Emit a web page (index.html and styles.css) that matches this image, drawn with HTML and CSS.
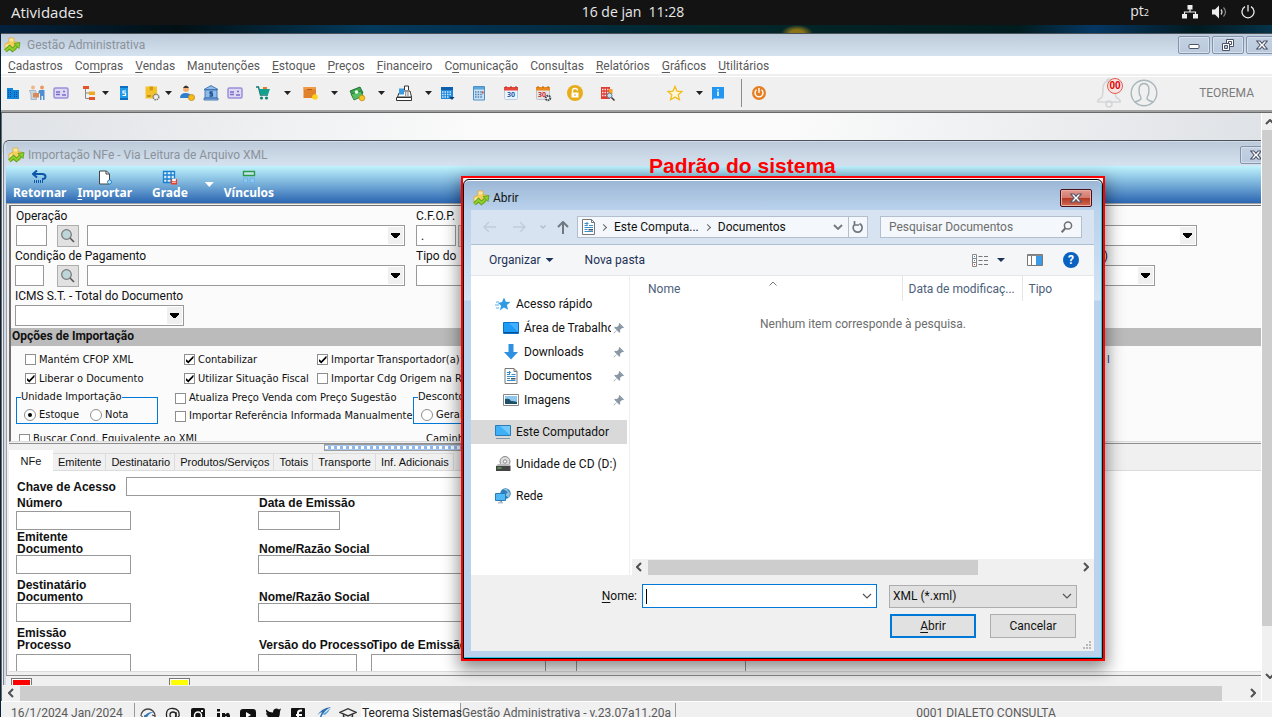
FILE: index.html
```html
<!DOCTYPE html>
<html lang="pt-BR">
<head>
<meta charset="utf-8">
<title>Gestão Administrativa</title>
<link rel="stylesheet" href="styles.css">
</head>
<body>
<svg class="sprite" aria-hidden="true">
  <symbol id="logo" viewBox="0 0 16 16">
    <path d="M5 1h5v4h4v5h-2v3H1V7l4-2z" fill="#f3cf5a" stroke="#d9a93a" stroke-width=".8"/>
    <path d="M5.500 1.500h4v3h-4zM1.500 7.500h4v3h-4z" fill="#fbe79a"/>
    <path d="M1.500 14l4-4 3 3 4-4" fill="none" stroke="#4a9418" stroke-width="3.600"/>
    <path d="M1.500 14l4-4 3 3 4-4" fill="none" stroke="#8fd02a" stroke-width="2.200"/>
    <path d="M10 6.500l6-1-1 6z" fill="#8fd02a" stroke="#4a9418" stroke-width=".7"/>
  </symbol>
  <symbol id="lens" viewBox="0 0 16 16">
    <path d="M9.500 9.500l4.500 4.500" stroke="#555" stroke-width="1.600"/>
    <circle cx="6.500" cy="6.500" r="4.800" fill="#bfd6d8" stroke="#777" stroke-width="1.200"/>
  </symbol>
  <symbol id="pin" viewBox="0 0 12 12">
    <path d="M6.500 1l4.500 4.500-1 .8-1-.3-2 2 .2 2-1 .8-2.300-2.500L1 11.500.5 11l3.200-3L1.200 5.800l.8-1 2 .2 2-2-.3-1z" fill="#8a98a5"/>
  </symbol>
  <symbol id="doc" viewBox="0 0 13 16">
    <path d="M.5.500h9l3 3v12H.5z" fill="#fff" stroke="#777"/>
    <path d="M9.500.500v3h3" fill="none" stroke="#777"/>
    <path d="M2.500 6.500h3M2.500 4.500h4M7 6.500h4M2.500 8.500h8.500M2.500 10.500h3M2.500 12.500h8.500M5 3v4" stroke="#3a8fc8"/>
    <path d="M6.500 10h4.500v1.500H6.500z" fill="#456"/>
  </symbol>
  <symbol id="xmark" viewBox="0 0 12 10">
    <path d="M.7 1h3.300l2 2.300L8 1h3.300L7.900 5l3.400 4H8L6 6.700 4 9H.7l3.400-4z" fill="#fff" stroke="#4c5368" stroke-width="1.100"/>
  </symbol>
</svg>

<header class="shell">
  <button class="shell-activities">Atividades</button>
  <time class="shell-clock">16 de jan&nbsp; 11:28</time>
  <div class="shell-tray">
    <span class="shell-lang">pt<small>2</small></span>
    <svg width="16" height="14" viewBox="0 0 16 14" fill="#eee"><path d="M5.500 0h5v4.500h-5zM0 9h5v4.500H0zM11 9h5v4.500h-5z"/><path d="M8 4v3M2.500 9.500V7h11v2.500" fill="none" stroke="#eee" stroke-width="1.200"/></svg>
    <svg width="15" height="14" viewBox="0 0 15 14"><path d="M0 4.500h3L7 .5v13l-4-4H0z" fill="#eee"/><path d="M9 4.500q2 2.500 0 5" fill="none" stroke="#ccc" stroke-width="1.300"/><path d="M11.500 2.500q4 4.500 0 9" fill="none" stroke="#888" stroke-width="1.200"/></svg>
    <svg width="14" height="14" viewBox="0 0 14 14" fill="none" stroke="#eee" stroke-width="1.300"><path d="M4 1.600a6 6 0 1 0 6 0M7 0v6.500"/></svg>
  </div>
</header>
<div class="wallpaper"></div>

<main class="app">
  <div class="titlebar">
    <svg class="app-logo"><use href="#logo"/></svg>
    <h1>Gestão Administrativa</h1>
    <div class="win-buttons">
      <button aria-label="Minimizar"><svg width="12" height="10" viewBox="0 0 12 10"><rect x="1" y="4.500" width="10" height="4" rx="1" fill="#fff" stroke="#4c5368"/></svg></button>
      <button aria-label="Restaurar"><svg width="12" height="12" viewBox="0 0 12 12" fill="#fff" stroke="#4c5368"><path d="M4.500.500h7v7h-7z"/><path d="M6.500 2.500h3v3h-3z"/><path d="M.5 4.500h7v7h-7z"/><path d="M2.500 6.500h3v3h-3z" fill="#b9c8dc"/></svg></button>
      <button aria-label="Fechar"><svg width="12" height="10"><use href="#xmark"/></svg></button>
    </div>
  </div>

  <nav class="menubar">
    <a href="#"><u>C</u>adastros</a><a href="#">Co<u>m</u>pras</a><a href="#"><u>V</u>endas</a><a href="#">Ma<u>n</u>utenções</a><a href="#"><u>E</u>stoque</a><a href="#"><u>P</u>reços</a><a href="#"><u>F</u>inanceiro</a><a href="#">C<u>o</u>municação</a><a href="#">Consu<u>l</u>tas</a><a href="#"><u>R</u>elatórios</a><a href="#"><u>G</u>ráficos</a><a href="#"><u>U</u>tilitários</a>
  </nav>

  <div class="toolbar">
    <button aria-label="Empresa"><svg viewBox="0 0 18 18"><path d="M3 4h6v11H3zM9 6h6v9H9z" fill="#1184dc"/><path d="M4 6.500h4M4 8.500h4M4 10.500h4M4 12.500h4M10 8.500h4M10 10.500h4M10 12.500h4" stroke="#0a4f9c" stroke-dasharray="1 1"/></svg></button>
    <button aria-label="Pessoas"><svg viewBox="0 0 18 18"><circle cx="5" cy="3.500" r="2" fill="#f0b78a"/><circle cx="14" cy="3.500" r="2" fill="#e89a6a"/><path d="M1.500 6.500h6l1 3v6H3v-5z" fill="#c9d6e0" stroke="#8fa3b3" stroke-width=".7"/><path d="M11.500 6h5v10h-1.500v-4h-1.500v4H12v-6l-2-2z" fill="#4f8fd0"/><path d="M5 9h6v4.500H5z" fill="#d88b58"/></svg></button>
    <button aria-label="Cartões"><svg viewBox="0 0 18 18"><rect x="2" y="4" width="14" height="10" rx="1.500" fill="#ddd8f4" stroke="#9a8fd8" stroke-width="1.500"/><path d="M4 8h4M4 10.500h4M10 11h4M11 7.500h2" stroke="#7a6cc8" stroke-width="1.400"/></svg></button>
    <button class="split" aria-label="Hierarquia"><svg viewBox="0 0 18 18"><path d="M3 2h6v3H3zM9 13h6v3H9z" fill="#e8542a"/><path d="M9 7.500h6v3.500H9z" fill="#f2a81e"/><path d="M5.500 5v9.500H9M5.500 9H9" stroke="#888" fill="none"/></svg><i class="caret"></i></button>
    <button aria-label="Serviços"><svg viewBox="0 0 18 18"><path d="M5 2h8v14H5z" fill="#1e9be8"/><path d="M5 2h8v2H5zM5 14h8v2H5z" fill="#0f6fbe"/><path d="M11 7H8v2h2.500v2.500H7.500" fill="none" stroke="#fff" stroke-width="1.200"/></svg></button>
    <button class="split" aria-label="Produtos"><svg viewBox="0 0 18 18"><path d="M2.500 2.500H14v12H2.500z" fill="#f4c32c"/><path d="M6.500 2.500h3.500v4H6.500z" fill="#d49a14"/><path d="M4 12h4" stroke="#8a6a10"/><circle cx="13" cy="13" r="2.800" fill="#eee" stroke="#777" stroke-width="1.500" stroke-dasharray="1.500 .7"/></svg><i class="caret"></i></button>
    <button aria-label="Vendedor"><svg viewBox="0 0 18 18"><circle cx="8" cy="5" r="3" fill="#f5b070"/><path d="M5 4q3-5 6 0z" fill="#333"/><path d="M2 14q0-5 6-5 4 0 5 3v2z" fill="#2f7fce"/><circle cx="13.500" cy="13.500" r="3" fill="#f6bb1f" stroke="#d08f10"/></svg></button>
    <button aria-label="Banco"><svg viewBox="0 0 18 18"><path d="M2 5.500L9 1.500l7 4zM3 6h12v8H3zM2 14h14v2H2z" fill="#8fbbe8" stroke="#3f73b0" stroke-width=".9"/><path d="M11 8H8v1.800h2.500V12H7.300M9 7v6" fill="none" stroke="#1b4f90" stroke-width="1.100"/></svg></button>
    <button aria-label="Cheques"><svg viewBox="0 0 18 18"><rect x="2" y="4" width="14" height="10" rx="1.500" fill="#ddd8f4" stroke="#9a8fd8" stroke-width="1.500"/><path d="M4 8h4M4 10.500h4M10 11h4M11 7.500h2" stroke="#7a6cc8" stroke-width="1.400"/></svg></button>
    <button class="split wide" aria-label="Compras"><svg viewBox="0 0 18 18"><path d="M2 3h2.500l2 8H14" fill="none" stroke="#11786f" stroke-width="1.400"/><path d="M5 5h11l-2 5.500H6.500z" fill="#13a08f"/><path d="M9 3h4v2H9z" fill="#e87a2a"/><circle cx="7.500" cy="14" r="1.600" fill="#13836f"/><circle cx="12.500" cy="14" r="1.600" fill="#13836f"/></svg><i class="caret"></i></button>
    <button class="split wide" aria-label="Estoque"><svg viewBox="0 0 18 18"><path d="M2.500 3H15v11H2.500z" fill="#e2812c"/><path d="M2.500 3H15v2.500H2.500z" fill="#f09a45"/><path d="M6 5.500h5" stroke="#b55d15"/><circle cx="14" cy="13" r="2.800" fill="#ffd21a"/></svg><i class="caret"></i></button>
    <button class="split wide" aria-label="Financeiro"><svg viewBox="0 0 18 18"><path d="M2 7l10-4 3 6-10 4z" fill="#3fa553" stroke="#1f7434"/><path d="M3 10l10-3 2 5-9 4z" fill="#58bd62" stroke="#1f7434" stroke-width=".8"/><circle cx="8.500" cy="8" r="1.800" fill="#e8ffe8"/><circle cx="14" cy="14" r="2.800" fill="#f7c325" stroke="#c98f0c" stroke-width=".8"/></svg><i class="caret"></i></button>
    <button class="split wide" aria-label="Caixa"><svg viewBox="0 0 18 18"><path d="M9.500 6V2h4v4M9 7h6l1.500 6h-14L4 9M1.500 13.500h15v3h-15z" fill="#fff" stroke="#333"/><path d="M4 4.500h5v6H4z" fill="#3a9be0"/><path d="M10 9h4M10 11h4" stroke="#333" stroke-dasharray="1 .7"/></svg><i class="caret"></i></button>
    <button aria-label="Agenda"><svg viewBox="0 0 18 18"><path d="M3 3h12v12H3z" fill="#1e88dd"/><path d="M3 3h12v3H3z" fill="#0c5fae"/><path d="M4 8h10M4 10.500h10M4 13h7" stroke="#cfe8ff" stroke-width="1.500" stroke-dasharray="1.500 1"/><path d="M11.500 13h5l-2.500 3z" fill="#123d6b"/></svg></button>
    <button class="far" aria-label="Calculadora"><svg viewBox="0 0 18 18"><path d="M3.500 2.500h11v13.500h-11z" fill="#cfe2f2" stroke="#4a90c8"/><path d="M4 3h10v2.500H4z" fill="#5aa6dd"/><path d="M5 8h8M5 10.500h8M5 13h8" stroke="#4888bb" stroke-width="1.500" stroke-dasharray="1.600 1"/><path d="M12 7.500h1.600v2H12z" fill="#e34040"/></svg></button>
    <button class="far" aria-label="Calendário"><svg viewBox="0 0 18 18"><rect x="2.500" y="3.500" width="13" height="12" rx="1" fill="#edf4fb" stroke="#b8cfe5"/><path d="M2 3h14v3.500H2z" fill="#e4473c"/><path d="M4 2v2M9 2v2M14 2v2" stroke="#a33"/><text x="9" y="13" class="cal-blue">30</text></svg></button>
    <button class="far" aria-label="Configurar calendário"><svg viewBox="0 0 18 18"><rect x="2.500" y="3.500" width="13" height="12" rx="1" fill="#e2e4e6" stroke="#c2c5c8"/><path d="M2 3h14v3.500H2z" fill="#ea8a1e"/><path d="M4 2v2M9 2v2M14 2v2" stroke="#a60"/><text x="8" y="13" class="cal-red">30</text><circle cx="14" cy="14" r="2.300" fill="#eee" stroke="#444c55" stroke-width="2" stroke-dasharray="1.500 .6"/></svg></button>
    <button class="far" aria-label="Segurança"><svg viewBox="0 0 18 18"><circle cx="9" cy="9" r="8" fill="#e7ad1a"/><path d="M5.500 8.500h7v5h-7z" fill="#fff"/><path d="M6.500 8.500V6.500q0-2 2.500-2t2.500 2" fill="none" stroke="#fff" stroke-width="1.300"/><path d="M9 10v2" stroke="#e7ad1a"/></svg></button>
    <button class="far" aria-label="Consulta"><svg viewBox="0 0 18 18"><path d="M3 3h9v12H3z" fill="#e23b30"/><path d="M4 5.500h7M4 8.500h7M4 11.500h7" stroke="#ffe1dc" stroke-width="1.500" stroke-dasharray="1.500 1"/><path d="M11 5h3.500v5H11z" fill="#f0a428"/><circle cx="11.500" cy="11.500" r="2.500" fill="#bfe1f3" stroke="#5d7f96"/><path d="M13.500 13.500l3 3" stroke="#333" stroke-width="1.400"/></svg></button>
    <button class="split wide star" aria-label="Favoritos"><svg viewBox="0 0 18 18"><path d="M9 2.500l2 4.600 5 .4-3.800 3.300 1.200 4.900L9 13.100l-4.400 2.600 1.200-4.900L2 7.500l5-.4z" fill="#fff8d8" stroke="#f3bd1f" stroke-width="1.300"/></svg><i class="caret"></i></button>
    <button aria-label="Informações"><svg viewBox="0 0 18 18"><path d="M3 3h12v11.500H5L3 16z" fill="#2196f3"/><path d="M9 7.500V12M9 5v1.500" stroke="#fff" stroke-width="1.500"/></svg></button>
    <span class="tool-sep"></span>
    <button aria-label="Sair"><svg viewBox="0 0 18 18"><circle cx="9" cy="9" r="7" fill="#e67e22"/><path d="M6.500 5.800a4 4 0 1 0 5 0M9 4v5" fill="none" stroke="#fff" stroke-width="1.400"/></svg></button>
    <div class="account">
      <button class="bell" aria-label="Notificações"><svg width="26" height="30" viewBox="0 0 26 30" fill="none" stroke="#d3d6d8" stroke-width="1.600"><path d="M13 3q-6 0-6 8 0 8-2 9-4 2-3 4h22q1-2-3-4-2-1-2-9 0-8-6-8zM11 3q0-2 2-2t2 2"/><circle cx="13" cy="26" r="3"/></svg><span class="count">00</span></button>
      <svg width="28" height="28" viewBox="0 0 28 28" fill="none" stroke="#a9b7ba" stroke-width="1.400"><circle cx="14" cy="14" r="12.800"/><path d="M4.500 23q6-1.500 6.500-3.500 0-2-1.500-4-1-5 0-8 1.500-3 4.500-3t4.500 3q1 3 0 8-1.500 2-1.500 4 .5 2 6.500 3.500"/></svg>
      <span class="user">TEOREMA</span>
    </div>
  </div>

  <div class="workspace">
    <div class="mdi">
      <section class="child">
        <div class="child-title">
          <svg class="app-logo"><use href="#logo"/></svg>
          <h2>Importação NFe - Via Leitura de Arquivo XML</h2>
          <button aria-label="Fechar importação"><svg width="12" height="10"><use href="#xmark"/></svg></button>
        </div>
        <div class="child-tools">
          <button><svg width="16" height="14" viewBox="0 0 16 14"><path d="M5 .5L1 4l4 3.500M1.500 4H10q3.500 0 3.500 2.500T10 9" fill="none" stroke="#0d56a8" stroke-width="2"/><path d="M2 11.500h9" stroke="#0d56a8" stroke-width="3" stroke-dasharray="1 1"/></svg>Retornar</button>
          <button class="t-import"><svg width="16" height="15" viewBox="0 0 16 15"><path d="M2.500 1h7l3 3v10h-10z" fill="#fff" stroke="#444"/><path d="M9 1v3h3" fill="none" stroke="#444"/><circle cx="12.500" cy="12" r="2" fill="#cce8fa" stroke="#1f86d0"/></svg><span><u>I</u>mportar</span></button>
          <button class="t-grade"><svg width="16" height="15" viewBox="0 0 16 15"><path d="M1.500 1.500h11v11h-11zM5 1v12M9 1v12M1 5h12M1 9h12" fill="#d9effc" stroke="#1b7fd0" stroke-width="1.300"/><path d="M9 9h6v5.500H9z" fill="#e8402a"/><path d="M10.500 9h3v2h-3zM10 12.500h4" fill="#fff" stroke="#fff" stroke-width=".6"/></svg>Grade</button>
          <button class="t-more" aria-label="Mais opções de grade"><i class="caret light"></i></button>
          <button class="t-links"><svg width="14" height="14" viewBox="0 0 14 14"><path d="M1.500 1.500h11v4h-11z" fill="#c5e6ee" stroke="#2c9c4a" stroke-width="1.400"/><path d="M1.500 8h4v4.500h-4zM8 8h4.500v4.500H8z" fill="#8cc7f2" stroke="#6fb2e6"/></svg>Vínculos</button>
        </div>

        <div class="child-body">
          <form class="import-form">
            <div class="row r1">
              <div class="f-left"><label for="op">Operação</label><div class="line"><input id="op" class="box code"><button type="button" class="find" aria-label="Buscar operação"><svg width="16" height="16"><use href="#lens"/></svg></button><span class="combo"><select aria-label="Operação"><option></option></select></span></div></div>
              <div class="f-right"><label for="cfop">C.F.O.P.</label><div class="line"><input id="cfop" class="box cfop" value="."><button type="button" class="find" aria-label="Buscar CFOP"></button><span class="combo"><select aria-label="CFOP"><option></option></select></span></div></div>
            </div>
            <div class="row r2">
              <div class="f-left"><label for="cond">Condição de Pagamento</label><div class="line"><input id="cond" class="box code"><button type="button" class="find" aria-label="Buscar condição"><svg width="16" height="16"><use href="#lens"/></svg></button><span class="combo"><select aria-label="Condição de Pagamento"><option></option></select></span></div></div>
              <div class="f-right"><div class="label-pair"><label for="tipo">Tipo do</label><span>)</span></div><div class="line"><span class="combo"><select id="tipo"><option></option></select></span></div></div>
            </div>
            <div class="row r3">
              <div><label for="icms">ICMS S.T. - Total do Documento</label><div class="line"><span class="combo small"><select id="icms"><option></option></select></span></div></div>
            </div>
            <h3>Opções de Importação</h3>
            <div class="options">
              <label><input type="checkbox">Mantém CFOP XML</label>
              <label><input type="checkbox" checked>Contabilizar</label>
              <label><input type="checkbox" checked>Importar Transportador(a)</label>
              <span class="tail">l</span>
              <label><input type="checkbox" checked>Liberar o Documento</label>
              <label><input type="checkbox" checked>Utilizar Situação Fiscal</label>
              <label><input type="checkbox">Importar Cdg Origem na Re</label>
            </div>
            <div class="groups">
              <fieldset class="unit"><legend>Unidade Importação</legend><label><input type="radio" name="un" checked>Estoque</label><label><input type="radio" name="un">Nota</label></fieldset>
              <div class="stack"><label><input type="checkbox">Atualiza Preço Venda com Preço Sugestão</label><label><input type="checkbox">Importar Referência Informada Manualmente</label></div>
              <fieldset class="disc"><legend>Desconto</legend><label><input type="radio" name="desc">Geral</label></fieldset>
            </div>
            <div class="last"><label><input type="checkbox">Buscar Cond. Equivalente ao XML</label><span>Caminho</span></div>
          </form>
          <div class="splitter"><i></i></div>
          <div class="tabs" role="tablist">
            <button role="tab" aria-selected="true">NFe</button><button role="tab">Emitente</button><button role="tab">Destinatario</button><button role="tab">Produtos/Serviços</button><button role="tab">Totais</button><button role="tab">Transporte</button><button role="tab">Inf. Adicionais</button>
          </div>
          <div class="nfe">
            <div class="key"><label for="chave">Chave de Acesso</label><input id="chave" class="box"></div>
            <div class="nfe-grid first"><label for="num">Número</label><label for="data">Data de Emissão</label><input id="num" class="box"><input id="data" class="box date"></div>
            <h4 class="close">Emitente</h4>
            <div class="nfe-grid"><label for="edoc">Documento</label><label for="enome">Nome/Razão Social</label><input id="edoc" class="box"><input id="enome" class="box name"></div>
            <h4>Destinatário</h4>
            <div class="nfe-grid"><label for="ddoc">Documento</label><label for="dnome">Nome/Razão Social</label><input id="ddoc" class="box"><input id="dnome" class="box name"></div>
            <h4>Emissão</h4>
            <div class="nfe-grid cut"><label for="proc">Processo</label><label for="ver">Versão do Processo</label><label for="temi">Tipo de Emissão</label><span></span><input id="proc" class="box"><input id="ver" class="box version"><input id="temi" class="box emission"><input class="box other" aria-label="Finalidade"></div>
          </div>
        </div>
        <div class="legend-bar"><i class="red"></i><i class="yellow"></i></div>
      </section>
      <div class="hscroll"><svg width="6" height="10" viewBox="0 0 6 10"><path d="M5 1L1 5l4 4"/></svg><i></i><svg width="6" height="10" viewBox="0 0 6 10"><path d="M1 1l4 4-4 4"/></svg></div>
    </div>
    <div class="vscroll"><svg width="10" height="6" viewBox="0 0 10 6"><path d="M1 5l4-4 4 4"/></svg><i></i><svg width="10" height="6" viewBox="0 0 10 6"><path d="M1 1l4 4 4-4"/></svg></div>
  </div>

  <footer class="status">
    <span class="s-date">16/1/2024 Jan/2024</span>
    <span class="s-icons">
      <svg viewBox="0 0 18 18"><path d="M2 10a7 7 0 0 1 14 0M3 10v5h3V9M13 9l3 1v5" fill="none" stroke="#444" stroke-width="1.300"/><path d="M4 14q2-9 12-8-8 1-9 9z" fill="#2f78b8"/></svg>
      <svg viewBox="0 0 18 18" fill="none" stroke="#222" stroke-width="1.300"><circle cx="9" cy="9" r="3"/><path d="M12 6v5q1 2 3-1 1-7-6-7.500T2.500 9q0 6 6 7"/></svg>
      <svg viewBox="0 0 18 18"><rect x="2" y="2" width="14" height="14" rx="2" fill="#111"/><circle cx="9" cy="9.500" r="3.500" fill="#111" stroke="#fff" stroke-width="1.500"/><path d="M12 4h2v2h-2z" fill="#fff"/></svg>
      <svg viewBox="0 0 18 18" fill="#111"><path d="M3 7h3v9H3zM3 3h3v2.500H3zM8 7h3v1.500q4-4 5 1V16h-3v-5q-1-2-2 0v5H8z"/></svg>
      <svg viewBox="0 0 18 18"><rect x="1" y="3" width="16" height="12" rx="3" fill="#111"/><path d="M7 6l5 3-5 3z" fill="#fff"/></svg>
      <svg viewBox="0 0 18 18" fill="#111"><path d="M2 3.500q3 3 7 3 0-4 4-4l2 1 2-1-1 3q0 9-8 10-4 0-6-1.500 3 0 4-1.500-2 0-3-2h1.500Q2 9 2 7l1.500.5Q1.500 6 2 3.500z"/></svg>
      <svg viewBox="0 0 18 18"><rect x="2" y="2" width="14" height="14" rx="1" fill="#111"/><path d="M13 4.500h-1.500Q9 4.500 9 7v9M7 9h6" fill="none" stroke="#fff" stroke-width="2"/></svg>
      <svg viewBox="0 0 18 18"><path d="M17 1Q6 2 2 12q2-5 6-6Q4 14 6 17q1-11 11-16z" fill="#2f6fb0"/><path d="M17 1q-5 6-9 7l3 1q4-3 6-8z" fill="#5aa7dd"/></svg>
      <svg class="cap" viewBox="0 0 20 18"><path d="M1 6l9-4 9 4-9 4zM5 8v6q5 3 10 0V8M5 11l5 2 5-2" fill="none" stroke="#333" stroke-width="1.500"/><path d="M12 13l7-2-5 5z" fill="#2f78b8"/></svg>
    </span>
    <span class="s-company">Teorema Sistemas</span>
    <span class="s-version">Gestão Administrativa - v.23.07a11.20a</span>
    <span class="s-user">0001 DIALETO CONSULTA</span>
  </footer>
</main>

<section class="callout">
  <p>Padrão do sistema</p>
  <div class="callout-frame">
    <div class="dialog" role="dialog" aria-label="Abrir">
      <div class="dlg-title"><svg class="app-logo"><use href="#logo"/></svg><span>Abrir</span><button aria-label="Fechar janela"><svg width="12" height="10"><use href="#xmark"/></svg></button></div>
      <div class="dlg-main">
        <div class="dlg-nav">
          <button class="arrow" aria-label="Voltar"><svg width="14" height="12" viewBox="0 0 14 12"><path d="M6 1L1 6l5 5M1 6h12" stroke="#c3cdd8"/></svg></button>
          <button class="arrow a2" aria-label="Avançar"><svg width="14" height="12" viewBox="0 0 14 12"><path d="M8 1l5 5-5 5M13 6H1" stroke="#c3cdd8"/></svg></button>
          <button class="arrow a3" aria-label="Recentes"><svg width="6" height="4" viewBox="0 0 6 4"><path d="M.5.500L3 3 5.500.500" stroke="#b5bfca"/></svg></button>
          <button class="arrow a4" aria-label="Acima"><svg width="12" height="13" viewBox="0 0 12 13"><path d="M1 6l5-5 5 5M6 1v12" stroke="#6f7881" stroke-width="2"/></svg></button>
          <div class="path"><svg width="13" height="16"><use href="#doc"/></svg><b></b><span>Este Computa...</span><b></b><span>Documentos</span><svg class="down" width="10" height="6" viewBox="0 0 10 6"><path d="M1 1l4 4 4-4" fill="none" stroke="#777" stroke-width="1.800"/></svg><button aria-label="Atualizar"><svg width="12" height="13" viewBox="0 0 12 13"><path d="M2.500 3.500A4.500 4.500 0 1 0 7.500 2.600M2.500 0v4h4.500" fill="none" stroke="#6f7881" stroke-width="1.700"/></svg></button></div>
          <div class="search"><input aria-label="Pesquisar" placeholder="Pesquisar Documentos"><svg width="12" height="12" viewBox="0 0 12 12"><circle cx="7" cy="4.500" r="3.600" fill="none" stroke="#6f6f6f" stroke-width="1.500"/><path d="M4.500 7L.7 11.300" stroke="#6f6f6f" stroke-width="2"/></svg></div>
        </div>
        <div class="dlg-tools">
          <button>Organizar<i class="caret navy"></i></button>
          <button class="new">Nova pasta</button>
          <button class="view" aria-label="Exibição"><svg width="17" height="13" viewBox="0 0 17 13"><path d="M.5.500h4v12h-4zM.5 4.500h4M.5 8.500h4" fill="#fff" stroke="#888"/><path d="M6.500 2.500h4M12 2.500h4M6.500 6.500h4M12 6.500h4M6.500 10.500h4M12 10.500h4" stroke="#777"/><path d="M2 2h1v1H2zM2 6h1v1H2z" fill="#3a8fc8"/><path d="M2 10h1v1H2z" fill="#d33"/></svg><i class="caret navy"></i></button>
          <button class="pane" aria-label="Painel de visualização"><svg width="16" height="12" viewBox="0 0 16 12"><path d="M.5.500h15v11H.5zM4.500 1v10" fill="#fff" stroke="#777"/><path d="M.5.500h15v1.500H.5z" fill="#888"/><path d="M9 2h6v9H9z" fill="#3a9be8"/></svg></button>
          <button class="help" aria-label="Ajuda">?</button>
        </div>
        <div class="dlg-content">
          <ul class="tree">
            <li><svg width="16" height="14" viewBox="0 0 16 14"><path d="M9 .5l1.800 4.200 4.700.3-3.600 3 1.200 4.800L9 10.500 4.700 13.500l1.500-4.700L3 6l4-1z" fill="#2f9be4"/><path d="M1 5h3M0 8h4M1 11h3" stroke="#58aee8"/></svg><a href="#">Acesso rápido</a></li>
            <li class="sub"><svg width="16" height="14" viewBox="0 0 16 14"><path d="M.5 1.500h15v11H.5z" fill="#1e9cf5" stroke="#0c72c8"/><path d="M1 11.500h14" stroke="#0a4f94"/><path d="M15 2v9L6 2z" fill="#42b0ff"/></svg><a href="#">Área de Trabalho</a><svg class="pin" width="12" height="12"><use href="#pin"/></svg></li>
            <li class="sub"><svg width="16" height="16" viewBox="0 0 16 16"><path d="M5.500 0h5v8H15l-7 7.500L1 8h4.500z" fill="#2f8fe0"/></svg><a href="#">Downloads</a><svg class="pin" width="12" height="12"><use href="#pin"/></svg></li>
            <li class="sub"><svg width="16" height="16"><use href="#doc"/></svg><a href="#">Documentos</a><svg class="pin" width="12" height="12"><use href="#pin"/></svg></li>
            <li class="sub"><svg width="16" height="12" viewBox="0 0 16 12"><path d="M.5.500h15v11H.5z" fill="#fff" stroke="#888"/><path d="M2 2h12v8H2z" fill="#8ec8ee"/><path d="M2 5q5-1 6 2 3 0 6 1v2H2z" fill="#1f4f66"/></svg><a href="#">Imagens</a><svg class="pin" width="12" height="12"><use href="#pin"/></svg></li>
            <li class="top sel"><svg width="16" height="16" viewBox="0 0 16 16"><path d="M.5 1.500h15v10H.5z" fill="#3fb0f5" stroke="#2a7cb8"/><path d="M15 2v9L5 2z" fill="#72c8fb"/><path d="M1 14h14v1H1z" fill="#7f97a8"/></svg><a href="#">Este Computador</a></li>
            <li class="top"><svg width="16" height="16" viewBox="0 0 16 16"><circle cx="10" cy="5.500" r="5" fill="#ddd" stroke="#888"/><circle cx="10" cy="5.500" r="1.700" fill="#fff" stroke="#888"/><path d="M1 10l2-2h11l2 2z" fill="#bbb"/><path d="M1 10h14.500v5H1z" fill="#444"/><path d="M2.500 12h4" stroke="#5fd35f"/></svg><a href="#">Unidade de CD (D:)</a></li>
            <li class="top"><svg width="16" height="16" viewBox="0 0 16 16"><circle cx="10.500" cy="5.500" r="5.200" fill="#2f80bc"/><path d="M8 1l5 3-3 3 4 3 1-5-3-4z" fill="#93bfd8"/><path d="M.5 5.500h10v7H.5z" fill="#4fb8f5" stroke="#2a7cb8"/><path d="M4 13h3v1.500H3v.8h5v-.8" fill="#789"/></svg><a href="#">Rede</a></li>
          </ul>
          <div class="files">
            <table><thead><tr><th class="c-name">Nome<svg width="8" height="5" viewBox="0 0 8 5"><path d="M.5 4.500L4 1l3.500 3.500" fill="none" stroke="#777"/></svg></th><th class="c-date">Data de modificaç...</th><th>Tipo</th></tr></thead>
            <tbody><tr><td colspan="3">Nenhum item corresponde à pesquisa.</td></tr></tbody></table>
            <div class="hscroll"><svg width="6" height="10" viewBox="0 0 6 10"><path d="M5 1L1 5l4 4"/></svg><i></i><svg width="6" height="10" viewBox="0 0 6 10"><path d="M1 1l4 4-4 4"/></svg></div>
          </div>
        </div>
        <form class="dlg-foot">
          <div class="foot-row"><label for="fname"><u>N</u>ome:</label><span class="thin-combo active"><span class="cursor"></span><input id="fname"><svg width="10" height="6" viewBox="0 0 10 6"><path d="M1 1l4 4 4-4"/></svg></span><span class="thin-combo"><select aria-label="Tipo de arquivo"><option>XML (*.xml)</option></select><svg width="10" height="6" viewBox="0 0 10 6"><path d="M1 1l4 4 4-4"/></svg></span></div>
          <div class="foot-actions"><button type="button" class="primary"><u>A</u>brir</button><button type="button">Cancelar</button></div>
          <svg class="grip" width="9" height="9" viewBox="0 0 9 9" fill="#b8b8b8"><path d="M6 0h2v2H6zM3 3h2v2H3zM6 3h2v2H6zM0 6h2v2H0zM3 6h2v2H3zM6 6h2v2H6z"/></svg>
        </form>
      </div>
    </div>
  </div>
</section>
</body>
</html>
```
FILE: styles.css
```css
* { box-sizing: border-box; }
body { margin: 0; height: 100vh; display: flex; flex-direction: column; overflow: hidden; position: relative; background: #062338; font: 12px/16px Roboto, "Open Sans", sans-serif; color: #111; }
button, input, select { font: inherit; color: inherit; margin: 0; padding: 0; border: 0; background: none; border-radius: 0; outline: 0; }
a { color: inherit; text-decoration: none; }
h1, h2, h3, h4, p, ul { margin: 0; padding: 0; font: inherit; list-style: none; }
svg { display: block; flex: none; }
u { text-underline-offset: 2px; }
.sprite { position: absolute; width: 0; height: 0; }
.app-logo { width: 18px; height: 16px; }
.caret { width: 7px; height: 4px; background: #222; clip-path: polygon(0 0, 100% 0, 50% 100%); }
.caret.light { width: 9px; height: 5px; background: #fff; }
.caret.navy { background: #1c3256; width: 8px; }

.shell { flex: none; height: 25px; background: #131313; color: #e8e8e8; display: grid; grid-template-columns: 1fr auto 1fr; align-items: center; padding: 0 17px 3px 11px; font: 14px/22px "Open Sans", "Noto Sans", sans-serif; }
.shell-activities { justify-self: start; font-size: 15px; }
.shell-tray { justify-self: end; display: flex; align-items: center; gap: 14px; }
.shell-lang { margin-right: 19px; }
.shell-lang small { font-size: 9px; }
.wallpaper { flex: none; height: 8px; background: radial-gradient(ellipse 16px 8px at 797px 8px, #8a7417 40%, transparent), linear-gradient(90deg, #04223e, #021014 14%, #043a5c 29%, #03304e 38%, #02282c 55%, #021c1e 80%, #053763 86%, #021a20 94%, #063349); }

.app { flex: 1; min-height: 0; display: flex; flex-direction: column; margin-left: 1px; border-top: 1px solid #4b5158; background: #f0f0f0; }
.titlebar { flex: none; height: 22px; display: flex; align-items: center; gap: 6px; padding-left: 2px; color: #8b929b; background: linear-gradient(#bccad9, #d5e2f0); }
.win-buttons { margin: 0 -6px 0 auto; display: flex; gap: 2px; }
.win-buttons button, .child-title button { width: 32px; height: 18px; display: grid; place-items: center; border: 1px solid #8592ab; border-radius: 2px; background: linear-gradient(#c3d1e2, #bac9dc); box-shadow: inset 0 0 0 1px #d5e0ed; }
.menubar { flex: none; height: 21px; display: flex; gap: 12px; padding: 2px 7px; background: linear-gradient(#fff 18px, #efefef 18px); color: #595959; border-bottom: 1px solid #fff; white-space: nowrap; }
.toolbar { flex: none; height: 36px; display: flex; align-items: center; gap: 6px; padding: 0 18px 3px 3px; border-bottom: 1px solid #696969; box-shadow: inset 0 -2px #a0a0a0; }
.toolbar svg { overflow: visible; }
.toolbar > button > svg { width: 18px; height: 18px; }
.toolbar .split { display: flex; align-items: center; gap: 4px; margin-left: 4px; }
.toolbar .split.wide { gap: 12px; }
.toolbar .far { margin-left: 8px; }
.toolbar .star { margin-left: 44px; }
.cal-blue, .cal-red { font: bold 7px "Noto Sans", sans-serif; text-anchor: middle; fill: #1a5fb4; }
.cal-red { fill: #c33; }
.tool-sep { width: 1px; height: 28px; margin: 0 2px 0 8px; background: #8c8c8c; }
.account { margin-left: auto; display: flex; align-items: center; color: #7c7c7c; }
.bell { display: flex; align-items: flex-start; margin-right: 7px; }
.count { width: 16px; height: 16px; margin-left: -15px; border: 1px solid #e55a50; border-radius: 50%; background: #f6e4e2; color: #e00000; font: bold 10px/14px "Liberation Sans", sans-serif; text-align: center; }
.user { margin-left: 41px; }

.workspace { flex: 1; min-height: 0; display: flex; border-left: 1px solid #696969; }
.mdi { flex: 1; min-width: 0; display: flex; flex-direction: column; padding-top: 27px; background: linear-gradient(100deg, #dfe2e6, #fbfbfb 38%, #fbfbfb 62%, #dfe2e6) top / 100% 40px no-repeat; }
.child { flex: 1; min-height: 0; display: flex; flex-direction: column; margin-left: 1px; border-top: 1px solid #4b5158; border-left: 1px solid #7d858f; border-radius: 6px 0 0 0; background: #d0dceb; padding: 1px 0 0 2px; }
.child-title { flex: none; height: 24px; display: flex; align-items: center; gap: 3px; padding: 2px 0 0 1px; color: #8b929b; background: linear-gradient(#bdcad9, #d5e2f0); overflow: hidden; }
.child-title button { margin: 0 -11px 0 auto; }
.child-tools { flex: none; height: 37px; display: flex; padding: 4px 7px; background: linear-gradient(#bff3fd, #8cc3e4 35%, #2b66b2); color: #fff; font: bold 12px/13px "Noto Sans", "Open Sans", sans-serif; }
.child-tools button { display: flex; flex-direction: column; align-items: center; justify-content: space-between; }
.t-import { margin-left: 11px; }
.child-tools .t-grade { margin-left: 20px; }
.child-tools .t-more { margin-left: 17px; justify-content: center; }
.child-tools .t-links { margin-left: 10px; }
.child-body { flex: 1; min-height: 0; display: flex; flex-direction: column; padding-left: 2px; border-top: 1px solid #a0a0a0; border-left: 1px solid #a0a0a0; border-bottom: 1px solid #8c8c8c; background: #f0f0f0; }
.import-form { flex: none; height: 237px; overflow: hidden; margin-top: 1px; border-top: 1px solid #6e6e6e; border-left: 2px solid #6e6e6e; border-bottom: 1px solid #dcdcdc; background: #fbfbfb; }
.row { display: flex; height: 40px; padding-left: 5px; gap: 11px; }
.row label, .row .label-pair { display: block; line-height: 21px; height: 19px; }
.row .label-pair { display: flex; justify-content: space-between; padding-right: 47px; }
.line { display: flex; height: 21px; }
.f-left { width: 389px; }
.f-right { flex: 1; }
.box { border: 1px solid #999; background: #fff; height: 21px; padding-left: 4px; }
.code { width: 31px; margin-right: 10px; }
.r2 .code { width: 29px; margin-right: 13px; }
.r2 .f-left { width: 390px; }
.cfop { width: 40px; margin-right: 2px; }
.find { width: 22px; height: 22px; display: grid; place-items: center; border: 1px solid #adadad; background: #e1e1e1; margin-right: 8px; }
.combo { flex: 1; display: flex; padding: 1px; border: 1px solid #999; background: #fff; }
.combo select { flex: 1; appearance: none; }
.combo::after { content: ""; width: 15px; background: linear-gradient(#000, #000) center 6px / 9px 1px no-repeat, linear-gradient(#000, #000) center 7px / 9px 1px no-repeat, linear-gradient(#000, #000) center 8px / 7px 1px no-repeat, linear-gradient(#000, #000) center 9px / 5px 1px no-repeat, linear-gradient(#000, #000) center 10px / 3px 1px no-repeat, #f0f0f0; }
.combo.small { flex: none; width: 169px; }
.r1 { padding-right: 64px; }
.r2, .r3 { padding-left: 4px; }
.r2 { padding-right: 106px; }
.import-form h3 { height: 18px; margin-top: 2px; padding-left: 1px; background: #bbb; font-weight: bold; line-height: 17px; }
.options { display: grid; grid-template-columns: 159px 133px 1fr 154px; grid-auto-rows: 19px; padding: 4px 0 0 14px; }
.options label, .groups label, .last label { display: flex; align-items: center; gap: 3px; white-space: nowrap; }
.options, .groups, .last { font: 11px/14px "DejaVu Sans Condensed", "Open Sans", sans-serif; }
.tail { color: #1a2a6b; padding-top: 3px; }
input[type=checkbox], input[type=radio] { appearance: none; width: 11px; height: 11px; flex: none; display: grid; place-items: center; border: 1px solid #8e8e8e; background: #fff; }
input[type=radio] { width: 12px; height: 12px; border-radius: 50%; }
input[type=checkbox]:checked::after { content: ""; width: 8px; height: 8px; background: #000; clip-path: polygon(0 40%, 35% 70%, 100% 0, 100% 30%, 35% 100%, 0 68%); }
input[type=radio]:checked::after { content: ""; width: 4px; height: 4px; border-radius: 50%; background: #000; }
.groups { display: flex; padding: 2px 0 0 5px; height: 39px; }
fieldset { margin: 0; padding: 4px 0 0 7px; height: 34px; border: 1px solid #0078d7; display: flex; align-items: flex-start; }
fieldset legend { padding: 0; margin-left: -3px; line-height: 14px; }
.unit { width: 142px; }
.unit label + label { margin-left: 11px; }
.stack { width: 255px; padding: 1px 0 0 17px; display: flex; flex-direction: column; gap: 4px; }
.disc { width: 120px; }
.last { display: flex; padding: 5px 0 0 8px; }
.last span { margin-left: auto; margin-right: 791px; }
.splitter { flex: none; height: 10px; margin-top: 1px; border-top: 1px solid #8f8f8f; padding-left: 315px; }
.splitter i { display: block; width: 300px; height: 7px; border: 1px solid #9c9c9c; background: repeating-linear-gradient(90deg, #fff 0 3px, #8fb8e8 3px 6px) center / 100% 3px no-repeat, #a9c9f0; }
.tabs { flex: none; height: 18px; display: flex; border-bottom: 1px solid #dadada; font: 11px/16px "Liberation Sans", sans-serif; }
.tabs button { padding: 0 4px 0 5px; border: 1px solid #dcdcdc; border-left-width: 0; height: 18px; white-space: nowrap; }
.tabs [aria-selected] { margin-top: -3px; height: 21px; width: 44px; background: #fff; border-color: #fff; }
.nfe { flex: 1; min-height: 0; overflow: hidden; background: #fff; padding: 6px 7px 0; border-bottom: 1px solid #dcdcdc; margin-bottom: 3px; font: bold 12px/12px "Liberation Sans", sans-serif; }
.nfe .box { height: 19px; }
.key { display: flex; height: 19px; align-items: center; }
.key label { width: 110px; padding-left: 1px; }
.key .box { flex: 1; max-width: 600px; }
.nfe-grid { display: grid; grid-template-columns: 242px 488px; }
.nfe-grid label { padding-left: 1px; white-space: nowrap; }
.nfe-grid .box { width: 115px; }
.nfe-grid.first label { line-height: 15px; }
.nfe-grid .date { width: 82px; }
.nfe-grid .name { width: auto; }
.nfe-grid.cut { grid-template-columns: 242px 113px 205px 170px; }
.nfe-grid.cut .box { height: 30px; margin-top: 3px; }
.nfe-grid .version { width: 99px; }
.nfe-grid .emission { width: 175px; }
.nfe-grid .other { width: 170px; }
h4 { margin-top: 5px; padding-left: 1px; }
h4.close { margin-top: 1px; }
.legend-bar { flex: none; height: 9px; display: flex; gap: 137px; padding: 2px 0 0 5px; overflow: hidden; background: #f0f0f0; }
.legend-bar i { width: 21px; height: 14px; border: 1px solid #777; box-shadow: inset 0 0 0 1px #fff; }
.red { background: #f00; }
.yellow { background: #ff0; }
.hscroll { flex: none; height: 16px; display: flex; align-items: center; background: #f0f0f0; padding: 0 5px; }
.hscroll i { flex: 1; height: 15px; margin: 0 28px 0 6px; background: #cdcdcd; }
.hscroll path, .vscroll path { fill: none; stroke: #505050; stroke-width: 2; }
.vscroll { flex: none; width: 11px; display: flex; flex-direction: column; align-items: flex-start; background: #f0f0f0; border-left: 1px solid #fff; padding: 6px 0 22px; overflow: hidden; }
.vscroll svg { margin-left: 3px; }
.vscroll i { flex: 1; width: 17px; margin: 5px 0 47px; background: #cdcdcd; }
.mdi > .hscroll { padding-left: 6px; }

.status { flex: none; height: 16px; overflow: hidden; display: flex; align-items: flex-start; border-top: 1px solid #fff; color: #5a5a5a; line-height: 20px; padding: 1px 0 0 10px; white-space: nowrap; }
.s-date { width: 124px; border-right: 1px solid #999; }
.s-icons { display: flex; gap: 7px; padding: 3px 0 0 4px; width: 226px; }
.s-icons svg { width: 18px; height: 18px; }
.s-company { color: #222; background: #fafafa; padding-left: 1px; width: 100px; border-right: 1px solid #999; }
.s-version { width: 215px; padding-left: 1px; border-right: 1px solid #999; }
.s-user { flex: 1; text-align: center; padding-left: 24px; }

.callout { position: absolute; left: 461px; top: 155px; width: 644px; }
.callout p { height: 21px; padding-left: 188px; font: bold 21px/22px "Liberation Sans", sans-serif; color: #f00; }
.callout-frame { border: 2px solid #f00; box-shadow: 0 6px 16px 2px rgba(0, 0, 0, .45); background: #f0f0f0; }
.dialog { border: 1px solid #000; margin-top: 1px; border-radius: 6px 6px 0 0; background: linear-gradient(#9bb6d5, #bad2ec 30px, #d4e3f4 120px, #bad2ec 121px); box-shadow: inset 0 1px #fff, inset -1px -1px #35c5e0; padding: 0 8px 7px 7px; }
.dlg-title { height: 30px; display: flex; align-items: center; padding: 6px 2px 0 1px; gap: 3px; }
.dlg-title button { margin-left: auto; width: 32px; height: 18px; display: grid; place-items: center; border: 1px solid #47121a; border-radius: 2px; background: linear-gradient(#e39a90, #d4796d 48%, #b23822 50%, #cf6b55); box-shadow: inset 0 0 0 1px #eab0a6; }
.dlg-main { background: #f0f0f0; }
.dlg-nav { height: 35px; display: flex; align-items: center; padding: 0 12px 0 12px; background: #d7e3f1; border-bottom: 1px solid #aebfd1; }
.arrow path { fill: none; stroke-width: 1.5; }
.arrow.a4 path { stroke-width: 2; }
.a2 { margin-left: 15px; }
.a3 { margin-left: 14px; }
.a4 { margin-left: 11px; }
.path { flex: 1; height: 22px; margin-left: 8px; display: flex; align-items: center; border: 1px solid #b3bfcd; background: #f4f7fb; padding-left: 4px; white-space: nowrap; }
.path b { width: 5px; height: 5px; margin: 0 8px 0 6px; border: solid #666; border-width: 1px 1px 0 0; rotate: 45deg; }
.path .down { margin-left: auto; margin-right: 5px; }
.path button { width: 19px; height: 20px; display: grid; place-items: center; border-left: 1px solid #b3bfcd; }
.search { width: 202px; height: 22px; margin-left: 12px; padding: 0 8px; display: flex; align-items: center; border: 1px solid #b3bfcd; background: #f4f7fb; }
.search input { flex: 1; min-width: 0; }
.search input::placeholder { color: #6d6d6d; opacity: 1; }
.dlg-tools { height: 31px; display: flex; align-items: center; padding: 0 15px 0 18px; background: #f5f6f8; border-bottom: 1px solid #e3e6ea; color: #1c3256; }
.dlg-tools button { display: flex; align-items: center; gap: 5px; }
.dlg-tools .new { margin-left: 31px; }
.dlg-tools .view { margin-left: auto; gap: 8px; }
.dlg-tools .pane { margin-left: 22px; }
.dlg-tools .help { width: 16px; height: 16px; margin-left: 20px; justify-content: center; border-radius: 50%; background: #0a62c0; color: #fff; font-weight: bold; }
.dlg-content { display: flex; height: 299px; background: #fff; }
.tree { width: 159px; padding-top: 16px; border-right: 1px solid #eee; }
.tree li { width: 156px; height: 24px; display: flex; align-items: center; gap: 5px; padding: 0 2px 0 24px; white-space: nowrap; }
.tree .sub { padding-left: 32px; }
.tree .top { margin-top: 8px; }
.tree a { flex: 1; min-width: 0; overflow: hidden; }
.sel { background: #d9d9d9; }
.pin { margin-left: -3px; }
.files { flex: 1; display: flex; flex-direction: column; padding-left: 2px; }
.files table { width: 100%; border-collapse: collapse; table-layout: fixed; }
.files th { height: 25px; text-align: left; font-weight: normal; padding: 0 0 0 6px; color: #4c607a; white-space: nowrap; }
.files .c-name { padding-left: 16px; width: 270px; }
.files .c-date { width: 120px; }
.files th + th { border-left: 1px solid #e5e5e5; }
.c-name svg { float: right; margin: 0 125px 0 0; }
.files td { height: 46px; text-align: center; color: #6d6d6d; }
.files .hscroll { margin-top: auto; padding: 0 5px 0 4px; }
.files .hscroll i { margin-right: 105px; }
.dlg-foot { height: 76px; padding: 9px 17px 0 0; position: relative; }
.foot-row { display: flex; justify-content: flex-end; align-items: center; height: 24px; }
.foot-row label { margin-right: 5px; }
.thin-combo { display: flex; align-items: center; width: 188px; height: 23px; padding: 0 4px 0 3px; margin-left: 12px; border: 1px solid #adadad; background: #e1e1e1; }
.thin-combo.active { width: 235px; height: 24px; margin-left: 0; border-color: #0078d7; background: #fff; }
.thin-combo input, .thin-combo select { flex: 1; min-width: 0; appearance: none; }
.thin-combo path { fill: none; stroke: #555; stroke-width: 1.2; }
.cursor { width: 1px; height: 15px; background: #000; }
.foot-actions { display: flex; justify-content: flex-end; gap: 14px; margin: 6px 1px 0 0; }
.foot-actions button { width: 86px; height: 24px; border: 1px solid #adadad; background: #e1e1e1; }
.foot-actions .primary { border: 2px solid #0078d7; }
.grip { position: absolute; right: 2px; bottom: 1px; }
```
